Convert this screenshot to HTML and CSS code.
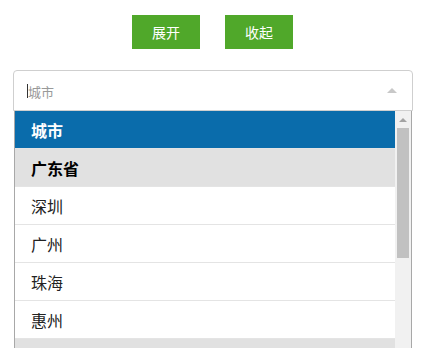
FILE: index.html
```html
<!DOCTYPE html>
<html lang="zh">
<head>
<meta charset="utf-8">
<link rel="stylesheet" href="styles.css">
</head>
<body>
<div class="toolbar">
  <button class="btn">展开</button>
  <button class="btn">收起</button>
</div>
<div class="select">
  <div class="select-box">
    <span class="caret"></span><span class="placeholder">城市</span>
    <span class="arrow"></span>
  </div>
  <div class="dropdown">
    <ul class="list">
      <li class="item active">城市</li>
      <li class="item group">广东省</li>
      <li class="item">深圳</li>
      <li class="item">广州</li>
      <li class="item">珠海</li>
      <li class="item">惠州</li>
      <li class="item group"></li>
    </ul>
    <div class="scrollbar">
      <div class="sb-btn"><span class="sb-arrow"></span></div>
      <div class="sb-thumb"></div>
    </div>
  </div>
</div>
</body>
</html>
```
FILE: styles.css
```css
html, body {
  margin: 0;
  padding: 0;
  background: #fff;
  overflow: hidden;
  font-family: "Noto Sans CJK SC", "Noto Sans", sans-serif;
}
.toolbar {
  display: flex;
  gap: 25px;
  padding: 15px 0 0 132px;
}
.btn {
  width: 68px;
  height: 34px;
  border: 0;
  margin: 0;
  padding: 0;
  background: #50a82a;
  color: #fff;
  font-family: "Noto Sans CJK SC", sans-serif;
  font-size: 14px;
  line-height: 34px;
}
.select {
  width: 400px;
  margin: 21px 0 0 13px;
}
.select-box {
  position: relative;
  height: 39px;
  border: 1px solid #cfcfcf;
  border-radius: 4px 4px 0 0;
  display: flex;
  align-items: center;
  padding-left: 13px;
}
.caret {
  width: 1px;
  height: 14px;
  background: #333;
  margin-top: 1px;
}
.placeholder {
  color: #999;
  font-size: 13px;
  margin-top: 1px;
}
.arrow {
  position: absolute;
  right: 15px;
  top: 17px;
  width: 0;
  height: 0;
  border-left: 5px solid transparent;
  border-right: 5px solid transparent;
  border-bottom: 5px solid #c8c8c8;
}
.dropdown {
  margin: 0 1px;
  height: 240px;
  overflow: hidden;
  border-left: 1px solid #a8a8a8;
  border-right: 1px solid #a8a8a8;
  display: flex;
}
.list {
  list-style: none;
  margin: 0;
  padding: 0;
  flex: 1;
}
.item {
  height: 36px;
  padding-top: 1px;
  line-height: 37px;
  border-bottom: 1px solid #e4e4e4;
  padding-left: 16px;
  font-size: 16px;
  color: #222;
}
.item.active {
  background: #0a6cab;
  color: #fff;
  font-weight: bold;
}
.item.group {
  background: #e1e1e1;
  color: #000;
  font-weight: bold;
}
.scrollbar {
  width: 16px;
  background: #f1f1f1;
  display: flex;
  flex-direction: column;
  align-items: center;
}
.sb-btn {
  height: 17px;
  width: 16px;
  display: flex;
  align-items: center;
  justify-content: center;
}
.sb-arrow {
  width: 0;
  height: 0;
  border-left: 4px solid transparent;
  border-right: 4px solid transparent;
  border-bottom: 4px solid #a3a3a3;
}
.sb-thumb {
  width: 12px;
  height: 130px;
  background: #c1c1c1;
}
```
